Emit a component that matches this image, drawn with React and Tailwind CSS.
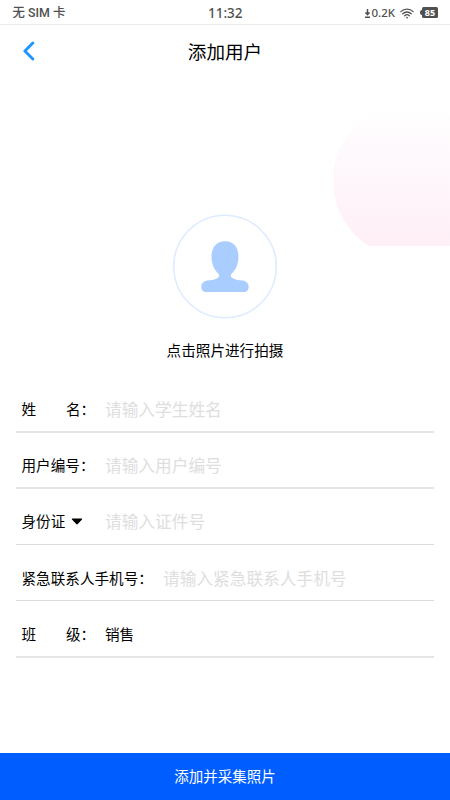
const FIELDS = [
    { id: 'name', chars: ['姓', '名'], placeholder: '请输入学生姓名', row: 'h-[56px] pt-[13px] border-b-2 border-[#e5e5e5]' },
    { id: 'number', label: '用户编号', placeholder: '请输入用户编号', row: 'h-[56px] pt-[13px] border-b-2 border-[#e5e5e5]' },
    { id: 'idCard', label: '身份证', select: true, placeholder: '请输入证件号', row: 'h-[56px] pt-[12px] border-b border-[#dcdcdc]' },
    { id: 'phone', label: '紧急联系人手机号', wide: true, placeholder: '请输入紧急联系人手机号', row: 'h-[56px] pt-[14px] border-b border-[#dcdcdc]' },
    { id: 'class', chars: ['班', '级'], value: '销售', row: 'h-[57px] pt-[14px] border-b-2 border-[#e5e5e5]' },
];

function StatusBar() {
    return (
        <div className="flex h-[25px] shrink-0 items-center border-b border-[#ebebeb] pt-[2px] pr-3 pl-[12.5px] text-[#505050]">
            <span className="flex-1 pt-px text-[12.4px] font-medium whitespace-pre">无 SIM 卡</span>
            <span className="font-['Noto_Sans',sans-serif] text-[13.5px] leading-5 font-medium">11:32</span>
            <div className="flex flex-1 items-center justify-end">
                <svg width="5" height="9" viewBox="0 0 5 9" fill="none" stroke="currentColor" strokeWidth="1.5">
                    <path d="M2.5 0v6M0.5 3.4l2 2.2 2-2.2M0 8.2h5" />
                </svg>
                <span className="ml-px font-['Noto_Sans',sans-serif] text-[11.5px] leading-none font-medium">0.2K</span>
                <svg className="ml-[5px]" width="14" height="11" viewBox="0 0 14 11" fill="none" stroke="currentColor" strokeWidth="1.3" strokeLinecap="round">
                    <path d="M0.9 3.6C4.3 0.2 9.7 0.2 13.1 3.6M2.8 5.7c2.4-2.3 6-2.3 8.4 0M4.7 7.7c1.3-1.2 3.3-1.2 4.6 0" />
                    <circle cx="7" cy="9.6" r="0.9" fill="currentColor" stroke="none" />
                </svg>
                <div className="-mt-px ml-[6px] flex items-center">
                    <span className="h-[5px] w-[2px] rounded-l-sm bg-[#505050]" />
                    <span className="flex h-[11px] w-4 items-center justify-center rounded-[1.5px] bg-[#505050] font-['Noto_Sans',sans-serif] text-[9px] leading-none font-bold text-white">85</span>
                </div>
            </div>
        </div>
    );
}

function FieldRow({ field }) {
    return (
        <div className={`flex items-center pl-[5.5px] ${field.row}`}>
            <label
                htmlFor={field.id}
                className={`flex shrink-0 items-center text-[14.6px] whitespace-nowrap ${field.wide ? 'w-[141.5px]' : 'w-[83.5px]'}`}
            >
                {field.chars ? (
                    <span className="flex w-[59px] justify-between">
                        {field.chars.map((c) => (
                            <span key={c}>{c}</span>
                        ))}
                    </span>
                ) : (
                    field.label
                )}
                {field.select ? (
                    <svg className="ml-[5.5px]" width="12" height="8" viewBox="0 0 12 8">
                        <path d="M1.3 0.5h9.4q.9.2.3.9L6.8 6.100q-.8.7-1.6 0L1 1.400q-.6-.7.3-.9z" />
                    </svg>
                ) : (
                    <span>：</span>
                )}
            </label>
            {field.value ? (
                <span className="text-[14.6px]">{field.value}</span>
            ) : (
                <input
                    id={field.id}
                    className="min-w-0 flex-1 bg-transparent text-[16.7px] outline-none placeholder:text-[#dedede]"
                    placeholder={field.placeholder}
                />
            )}
        </div>
    );
}

export default function App() {
    return (
        <main lang="zh-CN" className="relative flex h-screen w-full flex-col overflow-hidden bg-white font-[Roboto,'Noto_Sans_CJK_SC',sans-serif] text-black">
            <div className="absolute top-[104px] right-0 h-[142px] w-[117px] overflow-hidden">
                <div className="h-[154px] w-[154px] rounded-full bg-linear-to-b from-white via-[#fef6fb] to-[#ffeef6]" />
            </div>

            <StatusBar />

            <header className="relative flex h-[53px] shrink-0 items-center justify-center">
                <button className="absolute top-[16px] left-[21.5px]" aria-label="返回">
                    <svg width="14" height="20" viewBox="0 0 14 20" fill="none" stroke="#1e96ff" strokeWidth="2.9" strokeLinecap="round" strokeLinejoin="round">
                        <path d="M10.8 2L2.9 10l7.9 8" />
                    </svg>
                </button>
                <h1 className="pt-[4px] text-[18.6px]">添加用户</h1>
            </header>

            <section className="relative mt-[136px] flex flex-col items-center">
                <button className="flex h-[105px] w-[105px] items-center justify-center">
                    <svg width="105" height="105" viewBox="0 0 105 105" fill="none">
                        <circle cx="52" cy="52.5" r="51.3" fill="#fff" stroke="#dfebff" strokeWidth="1.6" />
                        <path transform="translate(28 26.7)" fill="#a9cdff" d="M24 0.5C15.5 0.5 10.5 6.5 10.5 16c0 7 2.8 13.5 7 17 1.3 1.8.8 3.4-1.2 4.5-3 1.7-6.3 1.9-9.8 2.4C2.5 40.6.3 43 .3 46.3c0 3 2 5 5.2 5h37c3.2 0 5.2-2 5.2-5 0-3.3-2.2-5.7-6.2-6.4-3.5-.5-6.8-.7-9.8-2.4-2-1.1-2.5-2.7-1.2-4.5 4.2-3.5 7-10 7-17C37.5 6.5 32.5.5 24 .5z" />
                    </svg>
                </button>
                <p className="mt-[21px] text-[14.6px] leading-[22px]">点击照片进行拍摄</p>
            </section>

            <form className="mx-4 mt-[15px]">
                {FIELDS.map((field) => (
                    <FieldRow key={field.id} field={field} />
                ))}
            </form>

            <button className="mt-auto h-[47px] shrink-0 bg-[#005dff] pt-[3px] text-[14.5px] text-white">添加并采集照片</button>
        </main>
    );
}
